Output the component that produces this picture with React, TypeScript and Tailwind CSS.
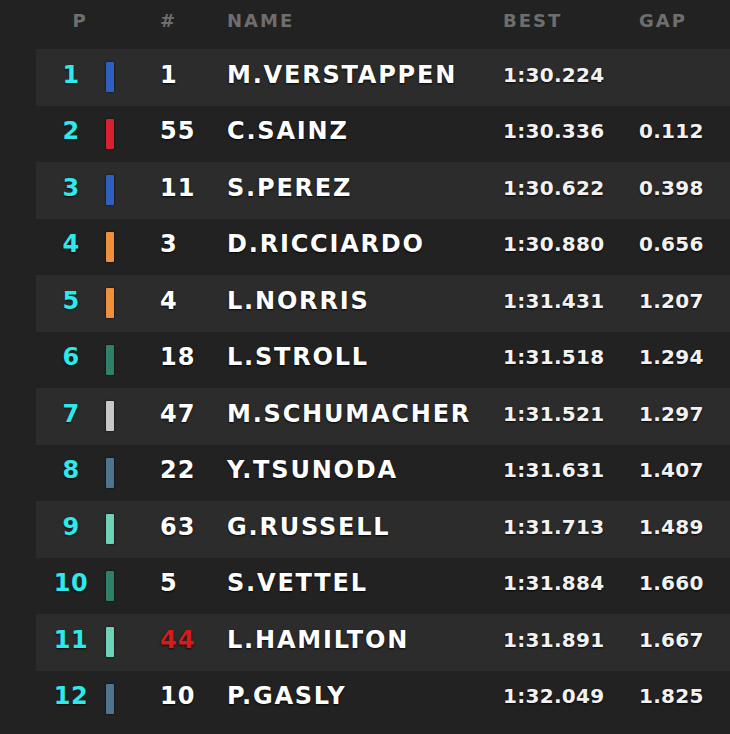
import React from "react";

type Row = { p: number; color: string; num: string; numRed?: boolean; name: string; best: string; gap: string };

const rows: Row[] = [
  { p: 1, color: "#2f5fc0", num: "1", name: "M.VERSTAPPEN", best: "1:30.224", gap: "" },
  { p: 2, color: "#d8202f", num: "55", name: "C.SAINZ", best: "1:30.336", gap: "0.112" },
  { p: 3, color: "#2f5fc0", num: "11", name: "S.PEREZ", best: "1:30.622", gap: "0.398" },
  { p: 4, color: "#f0903a", num: "3", name: "D.RICCIARDO", best: "1:30.880", gap: "0.656" },
  { p: 5, color: "#f0903a", num: "4", name: "L.NORRIS", best: "1:31.431", gap: "1.207" },
  { p: 6, color: "#2f8068", num: "18", name: "L.STROLL", best: "1:31.518", gap: "1.294" },
  { p: 7, color: "#c8c8c8", num: "47", name: "M.SCHUMACHER", best: "1:31.521", gap: "1.297" },
  { p: 8, color: "#4e7490", num: "22", name: "Y.TSUNODA", best: "1:31.631", gap: "1.407" },
  { p: 9, color: "#6fd1b8", num: "63", name: "G.RUSSELL", best: "1:31.713", gap: "1.489" },
  { p: 10, color: "#2f8068", num: "5", name: "S.VETTEL", best: "1:31.884", gap: "1.660" },
  { p: 11, color: "#6fd1b8", num: "44", numRed: true, name: "L.HAMILTON", best: "1:31.891", gap: "1.667" },
  { p: 12, color: "#4e7490", num: "10", name: "P.GASLY", best: "1:32.049", gap: "1.825" },
];

const font = { fontFamily: '"DejaVu Sans", Verdana, sans-serif' };

export default function App() {
  return (
    <div className="w-[730px] h-[734px] bg-[#222222] overflow-hidden" style={font}>
      <div className="flex items-center h-[49px] pb-[8px] text-[18px] font-bold leading-none tracking-[2px] text-[#6e6e6e]">
        <div className="w-[106px] pl-[54px] text-center">P</div>
        <div className="w-[8px]" />
        <div className="w-[46px]" />
        <div className="w-[67px]">#</div>
        <div className="w-[276px]">NAME</div>
        <div className="w-[136px]">BEST</div>
        <div>GAP</div>
      </div>
      <div className="ml-[36px] flex flex-col">
        {rows.map((r, i) => (
          <div
            key={r.p}
            className={`flex items-center h-[56.5px] pb-[5px] leading-none font-bold [text-shadow:0_1px_2px_rgba(0,0,0,0.85)] ${
              i % 2 === 0 ? "bg-[#2c2c2c]" : "bg-[#222222]"
            }`}
          >
            <div className="w-[70px] text-center text-[24px] text-[#2ee8ea] tracking-[0.5px]">{r.p}</div>
            <div
              className="w-[8px] h-[30px] mt-[5px] rounded-[1px] shadow-[0_0_2px_rgba(0,0,0,0.9)]"
              style={{ backgroundColor: r.color }}
            />
            <div className="w-[46px]" />
            <div className={`w-[67px] text-[24px] tracking-[1px] ${r.numRed ? "text-[#d41c1c]" : "text-white"}`}>{r.num}</div>
            <div className="w-[276px] text-[24px] tracking-[1.8px] text-white">{r.name}</div>
            <div className="w-[136px] text-[20px] tracking-[0.3px] text-[#f2f2f2]">{r.best}</div>
            <div className="text-[20px] tracking-[0.3px] text-[#f2f2f2]">{r.gap}</div>
          </div>
        ))}
      </div>
    </div>
  );
}
